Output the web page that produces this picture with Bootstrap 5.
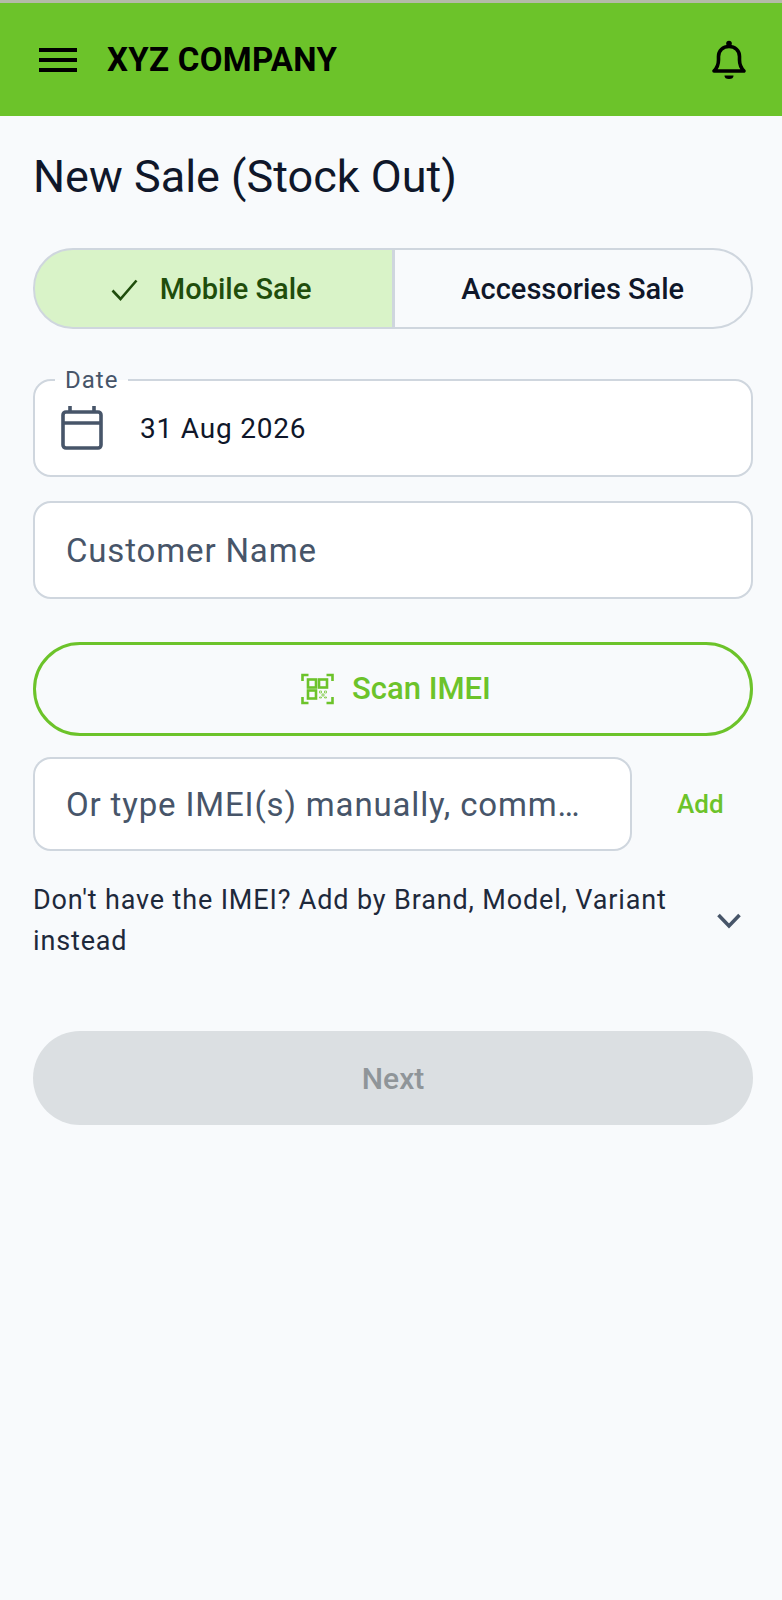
<!DOCTYPE html>
<html lang="en">
<head>
    <meta charset="UTF-8">
    <meta name="viewport" content="width=device-width, initial-scale=1.0">
    <title>New Sale</title>
    <link href="https://cdn.jsdelivr.net/npm/bootstrap@5.3.0/dist/css/bootstrap.min.css" rel="stylesheet">
    <style>
        body {
            font-family: Roboto, "Liberation Sans", sans-serif;
            background-color: #f8fafc;
            min-height: 1600px;
        }

        .top-strip {
            height: 3px;
            background-color: #b4bba8;
        }

        .app-bar {
            height: 113px;
            background-color: #6cc32a;
            padding: 0 35px 0 39px;
        }

        .app-bar .navbar-brand {
            font-size: 33px;
            font-weight: 700;
            letter-spacing: .3px;
            color: #000;
            margin-left: 30px;
            padding: 0;
            line-height: 1;
        }

        .page-body {
            padding: 35px 29px 0 33px;
        }

        .page-title {
            font-size: 45px;
            font-weight: 400;
            color: #0f172a;
            line-height: 52px;
            margin-bottom: 45px;
        }

        .sale-toggle {
            height: 81px;
        }

        .sale-toggle .btn {
            flex: 1 1 50%;
            font-size: 29px;
            font-weight: 500;
            line-height: 1;
            border: 2px solid #cfd6de;
            border-radius: 40px;
            color: #0f172a;
            background-color: #f8fafc;
            padding: 2px 0 0;
        }

        .sale-toggle .btn.active {
            background-color: #d9f3c8;
            color: #1f4d0c;
            border-color: #cfd6de;
            gap: 22px;
            padding-right: 4px;
        }

        .field-box {
            height: 98px;
            border: 2px solid #cfd6de;
            border-radius: 18px;
            background-color: #fff;
            padding: 0 31px;
            font-size: 33px;
            letter-spacing: .85px;
            color: #0f172a;
        }

        .field-box::placeholder {
            color: #475569;
            opacity: 1;
        }

        .field-box:focus {
            background-color: #fff;
            border-color: #cfd6de;
        }

        .date-field {
            position: relative;
            margin-top: 50px;
        }

        .date-field .field-box {
            padding: 0 26px;
        }

        /* sits on the top border, half page colour, half box colour */
        .date-label {
            position: absolute;
            top: -13px;
            left: 22px;
            padding: 0 10px;
            background: linear-gradient(#f8fafc 50%, #fff 50%);
            font-size: 24px;
            line-height: 28px;
            letter-spacing: 1px;
            color: #475569;
        }

        .date-value {
            font-size: 28px;
            letter-spacing: .8px;
            margin-left: 37px;
            padding-top: 2px;
        }

        .scan-btn {
            height: 94px;
            margin-top: 43px;
            border: 3px solid #6cc32a;
            border-radius: 47px;
            color: #6cc32a;
            font-size: 31px;
            font-weight: 500;
            gap: 18px;
            padding-left: 18px;
            background-color: transparent;
        }

        .imei-row {
            margin-top: 21px;
        }

        .imei-row .field-box {
            height: 94px;
            width: 599px;
            flex: none;
            padding-right: 44px;
            text-overflow: ellipsis;
        }

        .add-link {
            font-size: 26px;
            font-weight: 500;
            color: #6cc32a;
            text-decoration: none;
            margin-left: 45px;
        }

        .by-brand {
            margin-top: 29px;
            font-size: 27px;
            line-height: 41px;
            letter-spacing: .85px;
            color: #1e293b;
        }

        .by-brand svg {
            margin-right: 12px;
        }

        .next-btn {
            height: 94px;
            margin-top: 69px;
            border: 0;
            border-radius: 47px;
            font-size: 30px;
            font-weight: 500;
        }

        .next-btn:disabled {
            background-color: #dbdfe2;
            color: #8f9599;
            opacity: 1;
        }
    </style>
</head>
<body>
    <div class="top-strip"></div>
    <nav class="navbar app-bar d-flex justify-content-between align-items-center">
        <div class="d-flex align-items-center">
            <svg width="38" height="24" viewBox="0 0 38 24" fill="#000"><rect width="38" height="4"/><rect y="10" width="38" height="4"/><rect y="20" width="38" height="4"/></svg>
            <span class="navbar-brand">XYZ COMPANY</span>
        </div>
        <svg width="36" height="40" viewBox="0 0 36 40" fill="none" stroke="#000" stroke-width="3.6" stroke-linejoin="round"><path d="M3 31C6 28 7.500 25 7.500 20V16.500C7.500 10.500 12 6.500 18 6.500S28.500 10.500 28.500 16.500V20C28.500 25 30 28 33 31Z"/><circle cx="18" cy="3.500" r="2.800" fill="#000" stroke="none"/><path d="M13.500 35.500h9a4.500 3.500 0 0 1-9 0Z" fill="#000" stroke="none"/></svg>
    </nav>

    <main class="page-body">
        <h1 class="page-title">New Sale (Stock Out)</h1>

        <div class="btn-group w-100 sale-toggle" role="group">
            <button type="button" class="btn active d-flex align-items-center justify-content-center">
                <svg width="27" height="22" viewBox="0 0 27 22" fill="none" stroke="#1f4d0c" stroke-width="2.600"><path d="M1.500 11.500 9.500 20 25.500 1.500"/></svg>
                Mobile Sale
            </button>
            <button type="button" class="btn">Accessories Sale</button>
        </div>

        <div class="date-field">
            <span class="date-label">Date</span>
            <div class="field-box d-flex align-items-center">
                <svg width="42" height="44" viewBox="0 0 42 44" fill="none" stroke="#475569" stroke-width="3.600"><rect x="2" y="6" width="38" height="36" rx="3"/><path d="M2 17h38"/><path d="M9 0v6M33 0v6"/></svg>
                <span class="date-value">31 Aug 2026</span>
            </div>
        </div>

        <input type="text" class="form-control field-box mt-4 shadow-none" placeholder="Customer Name">

        <button type="button" class="btn w-100 scan-btn d-flex align-items-center justify-content-center">
            <svg width="33" height="32" viewBox="0 0 33 32" fill="none" stroke="#6cc32a" stroke-width="2.600">
                <path d="M1.500 8V2h6M25.500 2h6v6M1.500 24v6h6M31.500 24v6h-6"/>
                <rect x="7" y="6.500" width="8" height="8"/><rect x="18" y="6.500" width="8" height="8"/><rect x="7" y="17.500" width="8" height="8"/>
                <path d="M18.500 18h2v2h-2zM23.500 18h2v2h-2zM21 21h2v2h-2zM18.500 24h2v1h-2zM23.500 24h2v1h-2z" stroke-width="1" opacity=".7"/>
            </svg>
            Scan IMEI
        </button>

        <div class="imei-row d-flex align-items-center">
            <input type="text" class="form-control field-box shadow-none" placeholder="Or type IMEI(s) manually, comma separated">
            <a href="#" class="add-link">Add</a>
        </div>

        <div class="by-brand d-flex align-items-center justify-content-between">
            <span>Don't have the IMEI? Add by Brand, Model, Variant instead</span>
            <svg class="flex-shrink-0 ms-3" width="24" height="16" viewBox="0 0 24 16" fill="none" stroke="#475569" stroke-width="3.600"><path d="M1.500 2 12 13 22.500 2"/></svg>
        </div>

        <button type="button" class="btn w-100 next-btn" disabled>Next</button>
    </main>
</body>
</html>
